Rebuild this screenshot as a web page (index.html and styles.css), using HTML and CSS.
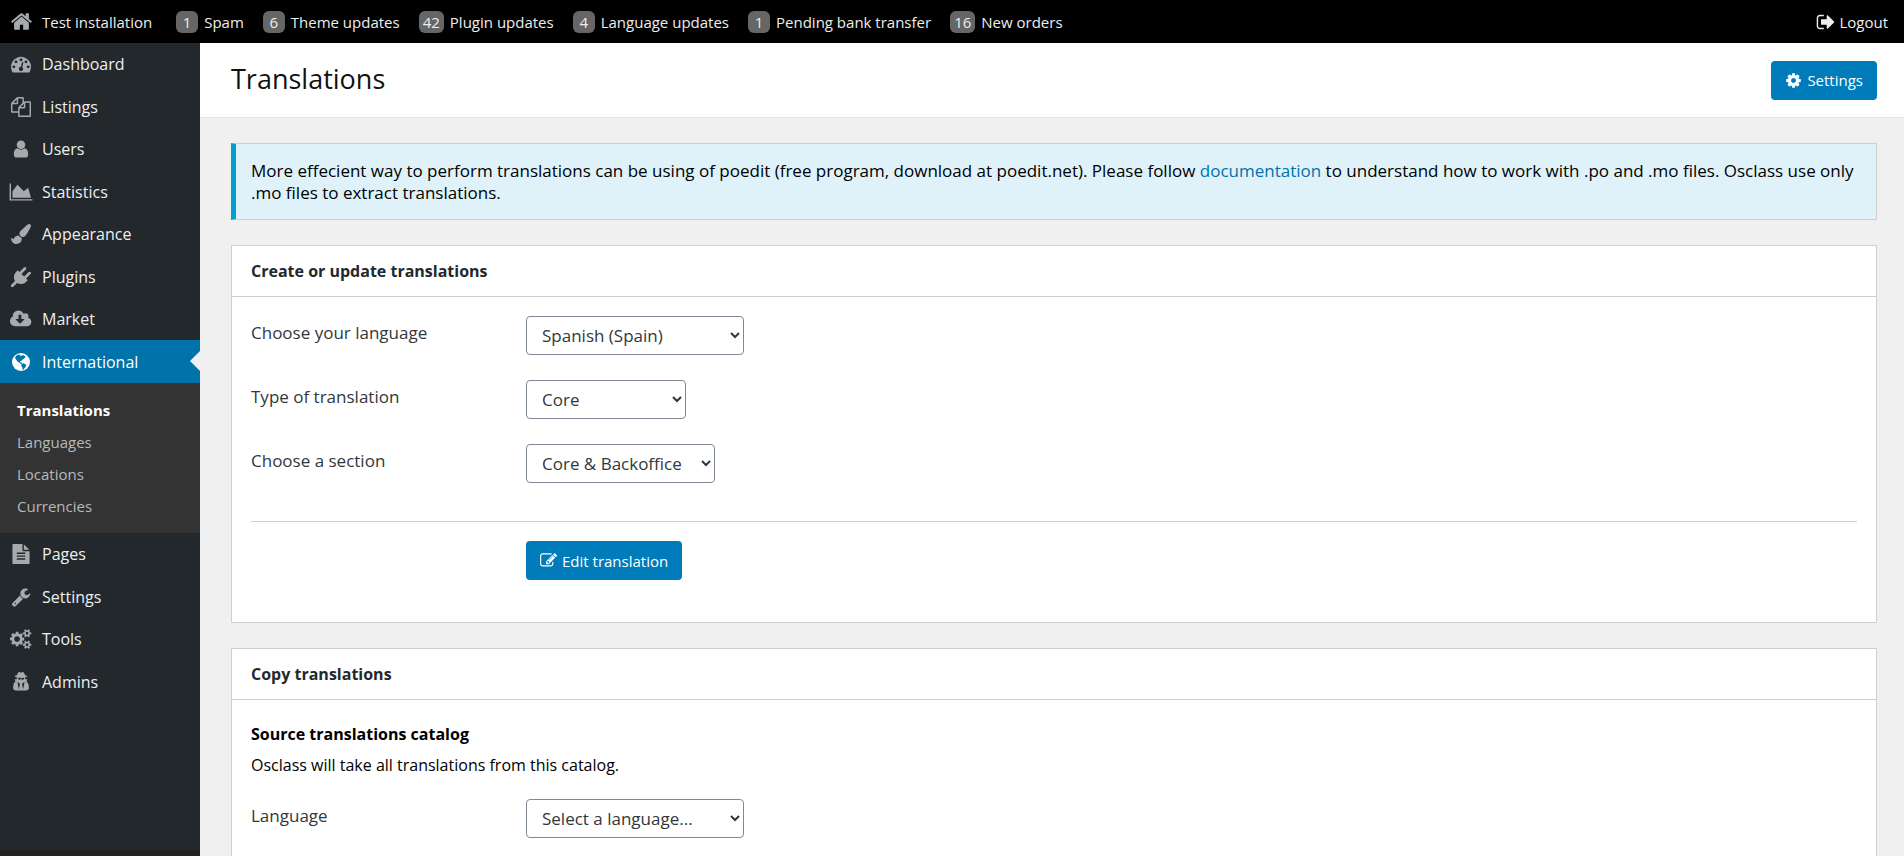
FILE: index.html
```html
<!DOCTYPE html>
<html lang="en">
<head>
<meta charset="utf-8">
<title>Translations</title>
<link rel="stylesheet" href="styles.css">
</head>
<body>
<header class="topbar">
  <nav class="topbar-links">
    <a class="top-link home" href="#"><svg class="ico" viewBox="0 0 1792 1792"><path d="M1472 992v480q0 26-19 45t-45 19h-384v-384h-256v384h-384q-26 0-45-19t-19-45v-480q0-1 .5-3t.5-3l575-474 575 474q1 2 1 6zm223-69l-62 74q-8 9-21 11h-3q-13 0-21-7l-692-577-692 577q-12 8-24 7-13-2-21-11l-62-74q-8-10-7-23.5t11-21.5l719-599q32-26 76-26t76 26l244 204v-195q0-14 9-23t23-9h192q14 0 23 9t9 23v408l219 182q10 8 11 21.5t-7 23.5z"/></svg>Test installation</a>
    <a class="top-link" href="#"><span class="count">1</span>Spam</a>
    <a class="top-link" href="#"><span class="count">6</span>Theme updates</a>
    <a class="top-link" href="#"><span class="count">42</span>Plugin updates</a>
    <a class="top-link" href="#"><span class="count">4</span>Language updates</a>
    <a class="top-link" href="#"><span class="count">1</span>Pending bank transfer</a>
    <a class="top-link" href="#"><span class="count">16</span>New orders</a>
  </nav>
  <a class="top-link logout" href="#"><svg class="ico" viewBox="0 0 1792 1792"><path d="M704 1440q0 4 1 20t.5 26.5-3 23.5-10 19.5-20.5 6.5h-320q-119 0-203.5-84.5t-84.5-203.5v-704q0-119 84.5-203.5t203.5-84.5h320q13 0 22.5 9.5t9.5 22.5q0 4 1 20t.5 26.5-3 23.5-10 19.5-20.5 6.5h-320q-66 0-113 47t-47 113v704q0 66 47 113t113 47h312l11.5 1 11.5 3 8 5.5 7 9 2 13.5zm928-544q0 26-19 45l-544 544q-19 19-45 19t-45-19-19-45v-288h-448q-26 0-45-19t-19-45v-384q0-26 19-45t45-19h448v-288q0-26 19-45t45-19 45 19l544 544q19 19 19 45z"/></svg>Logout</a>
</header>
<div class="layout">
  <aside class="sidebar">
    <ul class="menu">
      <li><a href="#"><svg class="ico" viewBox="0 0 1792 1792"><path d="M384 1152q0-53-37.5-90.5t-90.5-37.5-90.5 37.5-37.5 90.5 37.5 90.5 90.5 37.5 90.5-37.5 37.5-90.5zm192-448q0-53-37.5-90.5t-90.5-37.5-90.5 37.5-37.5 90.5 37.5 90.5 90.5 37.5 90.5-37.5 37.5-90.5zm428 481l101-382q6-26-7.5-48.5t-38.5-29.5-48 6.5-30 39.5l-101 382q-60 5-107 43.5t-63 98.5q-20 77 20 146t117 89 146-20 89-117q16-60-6-117t-72-91zm660-33q0-53-37.5-90.5t-90.5-37.5-90.5 37.5-37.5 90.5 37.5 90.5 90.5 37.5 90.5-37.5 37.5-90.5zm-640-640q0-53-37.5-90.5t-90.5-37.5-90.5 37.5-37.5 90.5 37.5 90.5 90.5 37.5 90.5-37.5 37.5-90.5zm448 192q0-53-37.5-90.5t-90.5-37.5-90.5 37.5-37.5 90.5 37.5 90.5 90.5 37.5 90.5-37.5 37.5-90.5zm320 448q0 261-141 483-19 29-54 29h-1402q-35 0-54-29-141-221-141-483 0-182 71-348t191-286 286-191 348-71 348 71 286 191 191 286 71 348z"/></svg>Dashboard</a></li>
      <li><a href="#"><svg class="ico" viewBox="0 0 1792 1792"><path d="M1696 384q40 0 68 28t28 68v1216q0 40-28 68t-68 28h-960q-40 0-68-28t-28-68v-288h-544q-40 0-68-28t-28-68v-672q0-40 20-88t48-76l408-408q28-28 76-48t88-20h416q40 0 68 28t28 68v328q68-40 128-40h416zm-544 213l-299 299h299v-299zm-640-384l-299 299h299v-299zm196 647l316-316v-416h-384v416q0 40-28 68t-68 28h-416v640h512v-256q0-40 20-88t48-76zm956 804v-1152h-384v416q0 40-28 68t-68 28h-416v640h896z"/></svg>Listings</a></li>
      <li><a href="#"><svg class="ico" viewBox="0 0 1792 1792"><path d="M1536 1399q0 109-62.5 187t-150.5 78h-854q-88 0-150.5-78t-62.5-187q0-85 8.5-160.5t31.5-152 58.5-131 94-89 134.5-34.5q131 128 313 128t313-128q76 0 134.5 34.5t94 89 58.5 131 31.5 152 8.5 160.5zm-256-887q0 159-112.5 271.5t-271.5 112.5-271.5-112.5-112.5-271.5 112.5-271.5 271.5-112.5 271.5 112.5 112.5 271.5z"/></svg>Users</a></li>
      <li><a href="#"><svg class="ico wide" viewBox="0 0 2048 1792"><path d="M2048 1536v128h-2048v-1536h128v1408h1920zm-384-1024l256 896h-1664v-576l448-576 576 576z"/></svg>Statistics</a></li>
      <li><a href="#"><svg class="ico" viewBox="0 0 1792 1792"><path d="M1615 0q70 0 122.5 46.5t52.5 116.5q0 63-45 151-332 629-465 752-97 91-218 91-126 0-216.5-92.5t-90.5-219.5q0-128 92-212l638-579q59-54 130-54zm-909 1034q39 76 106.5 130t150.5 76l1 71q4 213-129.5 347t-348.5 134q-123 0-218-46.5t-152.5-127.5-86.5-183-29-220q7 5 41 30t62 44.5 59 36.5 46 17q41 0 55-37 25-66 57.5-112.5t69.5-76 88-47.5 103-25.5 125-10.5z"/></svg>Appearance</a></li>
      <li><a href="#"><svg class="ico" viewBox="0 0 1792 1792"><path d="M1755 453q37 38 37 90.5t-37 90.5l-401 400 150 150-160 160q-163 163-389.5 186.5t-411.5-100.5l-362 362h-181v-181l362-362q-124-185-100.5-411.5t186.5-389.5l160-160 150 150 400-401q38-37 91-37t90 37 37 90.5-37 90.5l-400 401 234 234 401-400q38-37 91-37t90 37z"/></svg>Plugins</a></li>
      <li><a href="#"><svg class="ico wide" viewBox="-32 0 1920 1792"><path d="M1216 928q0-14-9-23t-23-9h-224v-352q0-13-9.5-22.5t-22.5-9.5h-192q-13 0-22.5 9.5t-9.5 22.5v352h-224q-13 0-22.5 9.5t-9.5 22.5q0 14 9 23l352 352q9 9 23 9t23-9l351-351q10-12 10-24zm640 224q0 159-112.5 271.5t-271.5 112.5h-1088q-185 0-316.5-131.5t-131.5-316.5q0-130 70-240t188-165q-2-30-2-43 0-212 150-362t362-150q156 0 285.5 87t188.5 231q71-62 166-62 106 0 181 75t75 181q0 76-41 138 130 31 213.5 135.5t83.5 238.5z"/></svg>Market</a></li>
      <li class="active"><a href="#"><svg class="ico" viewBox="0 0 20 20"><circle cx="10" cy="10" r="9"/><path class="land" d="M4 5.500 5.500 3.600 8 2.600 9.500 3.200 8.800 4.400 10.500 3.600 12.500 3.200 14.500 4.600 13.400 6.600 11.800 7.200 10.800 8.600 9.400 9 9 10 10.400 10.600 11 11.400 13.200 11.600 15.400 13 14.600 15 12.400 17.400 11.600 18 11.400 15.600 10.200 13.800 10.400 12 8.600 11 6.600 9.600 5 7.600Z"/></svg>International</a>
        <ul class="submenu">
          <li><a class="current" href="#">Translations</a></li>
          <li><a href="#">Languages</a></li>
          <li><a href="#">Locations</a></li>
          <li><a href="#">Currencies</a></li>
        </ul>
      </li>
      <li><a href="#"><svg class="ico" viewBox="0 0 1792 1792"><path d="M1596 476q14 14 28 36h-472v-472q22 14 36 28zm-476 164h544v1056q0 40-28 68t-68 28h-1344q-40 0-68-28t-28-68v-1600q0-40 28-68t68-28h800v544q0 40 28 68t68 28zm160 736v-64q0-14-9-23t-23-9h-704q-14 0-23 9t-9 23v64q0 14 9 23t23 9h704q14 0 23-9t9-23zm0-256v-64q0-14-9-23t-23-9h-704q-14 0-23 9t-9 23v64q0 14 9 23t23 9h704q14 0 23-9t9-23zm0-256v-64q0-14-9-23t-23-9h-704q-14 0-23 9t-9 23v64q0 14 9 23t23 9h704q14 0 23-9t9-23z"/></svg>Pages</a></li>
      <li><a href="#"><svg class="ico" viewBox="0 0 1792 1792"><path d="M448 1472q0-26-19-45t-45-19-45 19-19 45 19 45 45 19 45-19 19-45zm644-420l-682 682q-37 37-90 37-52 0-91-37l-106-108q-38-36-38-90 0-53 38-91l681-681q39 98 114.500 173.500t173.500 114.500zm634-435q0 39-23 106-47 134-164.500 217.500t-258.500 83.500q-185 0-316.500-131.500t-131.500-316.500 131.500-316.500 316.500-131.500q58 0 121.500 16.500t107.500 46.500q16 11 16 28t-16 28l-293 169v224l193 107q5-3 79-48.500t135.500-81 70.500-35.500q15 0 23.500 10t8.500 25z"/></svg>Settings</a></li>
      <li><a href="#"><svg class="ico wide" viewBox="-32 0 1920 1792"><path d="M832 896q0-106-75-181t-181-75-181 75-75 181 75 181 181 75 181-75 75-181zm768 512q0-52-38-90t-90-38-90 38-38 90q0 53 37.5 90.5t90.5 37.5 90.5-37.5 37.5-90.5zm0-1024q0-52-38-90t-90-38-90 38-38 90q0 53 37.5 90.5t90.5 37.5 90.5-37.5 37.5-90.5zm-384 421v185q0 10-7 19.5t-16 10.5l-155 24q-11 35-32 76 34 48 90 115 7 11 7 20 0 12-7 19-23 30-82.5 89.5t-78.5 59.5q-11 0-21-7l-115-90q-37 19-77 31-11 108-23 155-7 24-30 24h-186q-11 0-20-7.5t-10-17.500l-23-153q-34-10-75-31l-118 89q-7 7-20 7-11 0-21-8-144-133-144-160 0-9 7-19 10-14 41-53t47-61q-23-44-35-82l-152-24q-10-1-17-9.5t-7-19.5v-185q0-10 7-19.5t16-10.500l155-24q11-35 32-76-34-48-90-115-7-11-7-20 0-12 7-20 22-30 82-89t79-59q11 0 21 7l115 90q34-18 77-32 11-108 23-154 7-24 30-24h186q11 0 20 7.500t10 17.500l23 153q34 10 75 31l118-89q8-7 20-7 11 0 21 8 144 133 144 160 0 8-7 19-12 16-42 54t-45 60q23 48 34 82l152 23q10 2 17 10.500t7 19.500zm640 533v140q0 16-149 31-12 27-30 52 51 113 51 138 0 4-4 7-122 71-124 71-8 0-46-47t-52-68q-20 2-30 2t-30-2q-14 21-52 68t-46 47q-2 0-124-71-4-3-4-7 0-25 51-138-18-25-30-52-149-15-149-31v-140q0-16 149-31 13-29 30-52-51-113-51-138 0-4 4-7 4-2 35-20t59-34 30-16q8 0 46 46.500t52 67.500q20-2 30-2t30 2q51-71 92-112l6-2q4 0 124 70 4 3 4 7 0 25-51 138 17 23 30 52 149 15 149 31zm0-1024v140q0 16-149 31-12 27-30 52 51 113 51 138 0 4-4 7-122 71-124 71-8 0-46-47t-52-68q-20 2-30 2t-30-2q-14 21-52 68t-46 47q-2 0-124-71-4-3-4-7 0-25 51-138-18-25-30-52-149-15-149-31v-140q0-16 149-31 13-29 30-52-51-113-51-138 0-4 4-7 4-2 35-20t59-34 30-16q8 0 46 46.500t52 67.500q20-2 30-2t30 2q51-71 92-112l6-2q4 0 124 70 4 3 4 7 0 25-51 138 17 23 30 52 149 15 149 31z"/></svg>Tools</a></li>
      <li><a href="#"><svg class="ico" viewBox="0 0 1792 1792"><path d="M704 1536l96-448-96-128-128-64zm384 0l128-640-128 64-96 128zm104-1010q-2-4-4-6-10-8-96-8-70 0-167 19-7 2-21 2t-21-2q-97-19-167-19-86 0-96 8-2 2-4 6 2 18 4 27 2 3 7.500 6.500t7.500 10.500q2 4 7.500 20.500t7 20.500 7.500 17 8.500 17 9 14 12 13.500 14 9.500 17.500 8 20.500 4 24.500 2q36 0 59-12.500t32.500-30 14.500-34.500 11.500-29.500 17.500-12.500h12q11 0 17.500 12.500t11.500 29.500 14.500 34.500 32.500 30 59 12.500q13 0 24.500-2t20.500-4 17.500-8 14-9.500 12-13.500 9-14 8.500-17 7.500-17 7-20.500 7.500-20.500q2-7 7.500-10.500t7.500-6.500q2-9 4-27zm408 879q0 121-73 190t-194 69h-874q-121 0-194-69t-73-190q0-61 4.500-118t19-125.500 37.500-123.500 63.500-103.500 93.500-74.500l-90-220h214q-22-64-22-128 0-12 2-32-194-40-194-96 0-57 210-99 17-62 51.500-134t70.500-114q32-37 76-37 30 0 84 31t84 31 84-31 84-31q44 0 76 37 36 42 70.500 114t51.500 134q210 42 210 99 0 56-194 96 7 81-20 160h214l-82 225q63 33 107.500 96.500t65.500 143.500 29 151.500 8 157.500z"/></svg>Admins</a></li>
    </ul>
    <div class="sidebar-foot"></div>
  </aside>
  <main class="main">
    <div class="page-head">
      <h1>Translations</h1>
      <button class="btn" type="button"><svg class="ico" viewBox="0 0 1792 1792"><path d="M1152 896q0-106-75-181t-181-75-181 75-75 181 75 181 181 75 181-75 75-181zm512-109v222q0 12-8 23t-20 13l-185 28q-19 54-39 91 35 50 107 138 10 12 10 25t-9 23q-27 37-99 108t-94 71q-12 0-26-9l-138-108q-44 23-91 38-16 136-29 186-7 28-36 28h-222q-14 0-24.5-8.5t-11.5-21.5l-28-184q-49-16-90-37l-141 107q-10 9-25 9-14 0-25-11-126-114-165-168-7-10-7-23 0-12 8-23 15-21 51-66.5t54-70.5q-27-50-41-99l-183-27q-13-2-21-12.5t-8-23.5v-222q0-12 8-23t19-13l186-28q14-46 39-92-40-57-107-138-10-12-10-24 0-10 9-23 26-36 98.5-107.5t94.5-71.5q13 0 26 10l138 107q44-23 91-38 16-136 29-186 7-28 36-28h222q14 0 24.5 8.5t11.5 21.5l28 184q49 16 90 37l142-107q9-9 24-9 13 0 25 10 129 119 165 170 7 8 7 22 0 12-8 23-15 21-51 66.5t-54 70.5q26 50 41 98l183 28q13 2 21 12.5t8 23.5z"/></svg>Settings</button>
    </div>
    <div class="content">
      <p class="notice">More effecient way to perform translations can be using of poedit (free program, download at poedit.net). Please follow <a href="#">documentation</a> to understand how to work with .po and .mo files. Osclass use only .mo files to extract translations.</p>
      <section class="panel">
        <h2>Create or update translations</h2>
        <form class="panel-body">
          <div class="row"><label for="lang">Choose your language</label><select id="lang" class="w-lang"><option>Spanish (Spain)</option></select></div>
          <div class="row"><label for="type">Type of translation</label><select id="type" class="w-type"><option>Core</option></select></div>
          <div class="row"><label for="section">Choose a section</label><select id="section" class="w-section"><option>Core &amp; Backoffice</option></select></div>
          <div class="actions"><button class="btn" type="button"><svg class="ico" viewBox="0 0 1792 1792"><path d="M888 1184l116-116-152-152-116 116v56h96v96h56zm440-720q-16-16-33 1l-350 350q-17 17-1 33t33-1l350-350q17-17 1-33zm80 594v190q0 119-84.5 203.500t-203.500 84.500h-832q-119 0-203.500-84.500t-84.500-203.500v-832q0-119 84.500-203.500t203.500-84.500h832q63 0 117 25 15 7 18 23 3 17-9 29l-49 49q-14 14-32 8-23-6-45-6h-832q-66 0-113 47t-47 113v832q0 66 47 113t113 47h832q66 0 113-47t47-113v-126q0-13 9-22l64-64q15-15 35-7t20 29zm-96-738l288 288-672 672h-288v-288zm444 132l-92 92-288-288 92-92q28-28 68-28t68 28l152 152q28 28 28 68t-28 68z"/></svg>Edit translation</button></div>
        </form>
      </section>
      <section class="panel">
        <h2>Copy translations</h2>
        <form class="panel-body">
          <h3>Source translations catalog</h3>
          <p class="hint">Osclass will take all translations from this catalog.</p>
          <div class="row"><label for="source">Language</label><select id="source" class="w-lang"><option>Select a language...</option></select></div>
        </form>
      </section>
    </div>
  </main>
</div>
</body>
</html>
```
FILE: styles.css
```css
* { box-sizing: border-box; }
html, body { height: 100%; }
body {
  margin: 0;
  display: flex;
  flex-direction: column;
  overflow: hidden;
  background: #f0f0f0;
  color: #000;
  font: 16px/22px "Open Sans", "Noto Sans", sans-serif;
}
h1, h2, h3, p, ul { margin: 0; padding: 0; }
ul { list-style: none; }
a { text-decoration: none; }
.ico { flex: none; width: 18px; height: 18px; fill: currentColor; }

.topbar {
  flex: none;
  height: 43px;
  padding: 0 16px 0 10px;
  display: flex;
  justify-content: space-between;
  align-items: center;
  background: #000;
  font-size: 15px;
}
.topbar-links { display: flex; gap: 19px; }
.top-link { display: flex; align-items: center; gap: 6px; color: #eee; white-space: nowrap; }
.home { gap: 9px; margin-right: 5px; }
.home .ico { width: 23px; height: 23px; color: #a7aaad; }
.logout { gap: 3px; }
.logout .ico { width: 20px; height: 20px; }
.count {
  min-width: 22px;
  padding: 0 4px;
  border-radius: 6px;
  background: #666;
  text-align: center;
}

.layout { flex: 1; min-height: 0; display: flex; }
.sidebar { flex: none; width: 200px; display: flex; flex-direction: column; background: #23282d; }
.menu { flex: 1; }
.menu > li > a {
  position: relative;
  display: flex;
  align-items: center;
  gap: 11px;
  height: 42px;
  padding-left: 11px;
  color: #eee;
}
.menu > li:nth-child(even) > a { height: 43px; }
.menu .ico { width: 20px; height: 20px; color: #a7aaad; }
.menu .wide { width: 24px; margin: 0 -2px; }
.menu > .active > a { background: #0073aa; color: #fff; }
.menu > .active .ico { color: #fff; }
.land { fill: #0073aa; }
.menu > .active > a::after {
  content: "";
  position: absolute;
  right: 0;
  top: 11px;
  border: 10px solid transparent;
  border-left: 0;
  border-right-color: #f0f0f0;
}
.submenu { padding: 11px 0; background: #333; font-size: 15px; line-height: 32px; }
.submenu a { display: block; padding-left: 17px; color: #b4b9be; }
.submenu .current { color: #fff; font-weight: 700; }
.sidebar-foot { flex: none; height: 6px; background: #222; }

.main { flex: 1; min-width: 0; }
.page-head {
  display: flex;
  justify-content: space-between;
  align-items: center;
  height: 75px;
  padding: 0 27px 0 31px;
  background: #fff;
  border-bottom: 1px solid #e2e2e2;
}
h1 { padding-bottom: 2px; font-size: 27px; font-weight: 400; line-height: 36px; color: #111; }
.btn {
  display: inline-flex;
  align-items: center;
  gap: 5px;
  height: 39px;
  padding: 0 14px;
  border: 0;
  border-radius: 4px;
  background: #007cba;
  color: #fff;
  font: inherit;
  font-size: 15px;
}
.btn .ico { width: 17px; height: 17px; }

.content { padding: 25px 27px 0 31px; }
.notice {
  padding: 16px 15px 15px;
  border: 1px solid #ccd0d4;
  border-left: 5px solid #00a0d2;
  background: #dff2fa;
  font-size: 17px;
}
.notice a { color: #0073aa; }
.panel { margin-top: 25px; border: 1px solid #ccd0d4; background: #fff; }
.panel h2 {
  padding: 14px 19px;
  border-bottom: 1px solid #ccd0d4;
  font-size: 16px;
  line-height: 22px;
  color: #23282d;
}
.panel-body { padding: 19px 19px 42px; }
.row { display: flex; margin-bottom: 25px; }
.row label { width: 275px; padding-top: 6px; font-size: 17px; font-weight: 500; color: #32373c; }
select {
  height: 39px;
  padding: 0 0 0 11px;
  border: 1px solid #7e8993;
  border-radius: 4px;
  background: #fff;
  color: #32373c;
  font: inherit;
  font-size: 17px;
}
.w-lang { width: 218px; }
.w-type { width: 160px; }
.w-section { width: 189px; }
.actions { margin-top: 38px; padding: 19px 0 0 275px; border-top: 1px solid #ccd0d4; }
h3 { margin-top: 4px; font-size: 16px; line-height: 22px; }
.hint { margin: 9px 0 23px; }
```
